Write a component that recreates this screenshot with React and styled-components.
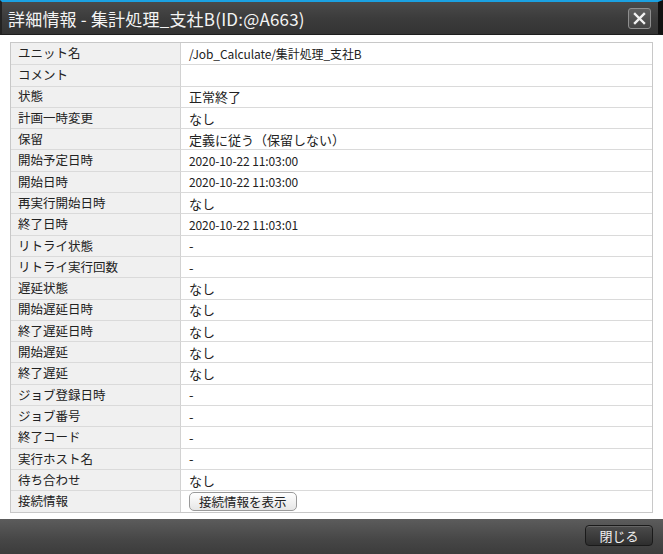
import React from "react";
import styled, { createGlobalStyle } from "styled-components";

const Global = createGlobalStyle`
  html, body { margin: 0; padding: 0; background: #ffffff; }
  body { font-family: "Noto Sans CJK JP", "Noto Sans", sans-serif; }
`;

const Dialog = styled.div`
  width: 663px;
  height: 554px;
  display: flex;
  flex-direction: column;
  background: #ffffff;
  overflow: hidden;
`;

const TitleBar = styled.div`
  height: 32px;
  flex: none;
  border-top: 2px solid #1ba1e2;
  background: linear-gradient(#4a4a4a, #3c3c3c 50%, #343434);
  border-left: 2px solid #222;
  border-right: 5px solid #111;
  border-bottom: 1px solid #1e1e1e;
  display: flex;
  align-items: center;
  justify-content: space-between;
  padding: 0 7px 0 6px;
  box-sizing: content-box;
`;

const Title = styled.div`
  color: #f4f4f4;
  font-size: 17px;
  letter-spacing: 0.2px;
  line-height: 1;
  padding-top: 1px;
`;

const CloseX = styled.button`
  width: 23px;
  height: 21px;
  border: 1px solid #8f8f8f;
  border-radius: 3px;
  background: linear-gradient(#606060, #454545);
  display: flex;
  align-items: center;
  justify-content: center;
  padding: 0;
`;

const Body = styled.div`
  flex: 1;
  padding: 7px 10px 0 10px;
`;

const Table = styled.div`
  border: 1px solid #c8c8c8;
  display: grid;
  grid-template-columns: 170px 1fr;
  grid-template-rows: repeat(22, 21.3px);
`;

const Label = styled.div`
  box-sizing: border-box;
  background: #f0f0f0;
  border-right: 1px solid #d2d2d2;
  border-top: ${(p) => (p.$first ? "none" : "1px solid #dadada")};
  padding-left: 7px;
  font-size: 12.5px;
  color: #222;
  display: flex;
  align-items: center;
  line-height: 1;
`;

const Value = styled.div`
  box-sizing: border-box;
  border-top: ${(p) => (p.$first ? "none" : "1px solid #dadada")};
  padding-left: 8px;
  font-size: ${(p) => (p.$num ? "12px" : "13px")};
  letter-spacing: ${(p) => (p.$num ? "-0.1px" : "0")};
  color: #222;
  display: flex;
  align-items: center;
  line-height: 1;
`;

const InfoButton = styled.button`
  height: 19px;
  padding: 0 9px;
  margin-top: 1px;
  border: 1px solid #9a9a9a;
  border-radius: 5px;
  background: linear-gradient(#ffffff, #e6e6e6);
  font-family: "Noto Sans CJK JP", sans-serif;
  font-size: 12.5px;
  color: #222;
  line-height: 1;
`;

const Footer = styled.div`
  height: 35px;
  flex: none;
  background: linear-gradient(#5c5c5c, #464646 60%, #3c3c3c);
  display: flex;
  align-items: center;
  justify-content: flex-end;
  padding-right: 10px;
  box-sizing: border-box;
`;

const FooterButton = styled.button`
  width: 68px;
  height: 21px;
  border: 1px solid #1a1a1a;
  border-radius: 4px;
  background: linear-gradient(#4c4c4c, #2e2e2e);
  box-shadow: inset 0 1px 0 rgba(255,255,255,0.15);
  color: #f0f0f0;
  font-family: "Noto Sans CJK JP", sans-serif;
  font-size: 13px;
  line-height: 1;
  margin-top: -2px;
`;

const rows = [
  ["ユニット名", "/Job_Calculate/集計処理_支社B", true],
  ["コメント", ""],
  ["状態", "正常終了"],
  ["計画一時変更", "なし"],
  ["保留", "定義に従う（保留しない）"],
  ["開始予定日時", "2020-10-22 11:03:00", true],
  ["開始日時", "2020-10-22 11:03:00", true],
  ["再実行開始日時", "なし"],
  ["終了日時", "2020-10-22 11:03:01", true],
  ["リトライ状態", "-"],
  ["リトライ実行回数", "-"],
  ["遅延状態", "なし"],
  ["開始遅延日時", "なし"],
  ["終了遅延日時", "なし"],
  ["開始遅延", "なし"],
  ["終了遅延", "なし"],
  ["ジョブ登録日時", "-"],
  ["ジョブ番号", "-"],
  ["終了コード", "-"],
  ["実行ホスト名", "-"],
  ["待ち合わせ", "なし"],
];

export default function App() {
  return (
    <Dialog>
      <Global />
      <TitleBar>
        <Title>詳細情報 - 集計処理_支社B(ID:@A663)</Title>
        <CloseX aria-label="close">
          <svg width="13" height="13" viewBox="0 0 13 13">
            <path d="M2 2 L11 11 M11 2 L2 11" stroke="#f2f2f2" strokeWidth="2.4" strokeLinecap="square" />
          </svg>
        </CloseX>
      </TitleBar>
      <Body>
        <Table>
          {rows.map(([k, v, num], i) => (
            <React.Fragment key={k}>
              <Label $first={i === 0}>{k}</Label>
              <Value $first={i === 0} $num={num}>{v}</Value>
            </React.Fragment>
          ))}
          <Label>接続情報</Label>
          <Value>
            <InfoButton>接続情報を表示</InfoButton>
          </Value>
        </Table>
      </Body>
      <Footer>
        <FooterButton>閉じる</FooterButton>
      </Footer>
    </Dialog>
  );
}
